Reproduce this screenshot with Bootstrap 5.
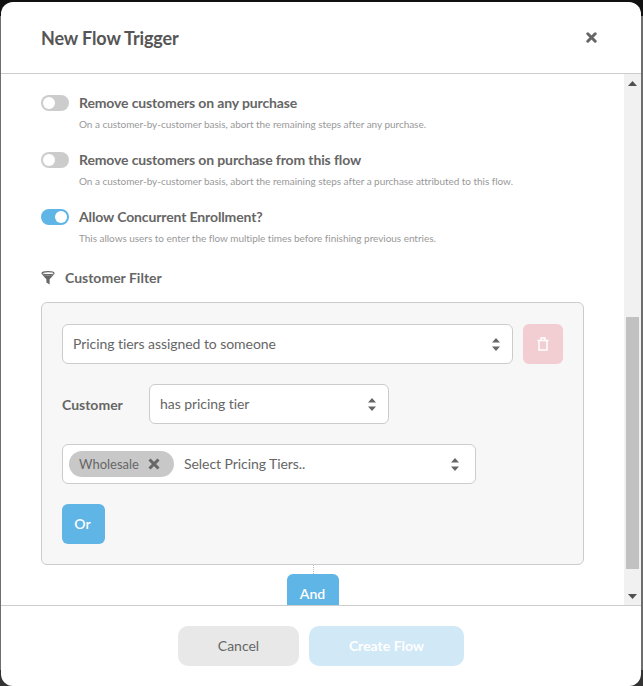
<!DOCTYPE html>
<html lang="en">
<head>
<meta charset="utf-8">
<title>New Flow Trigger</title>
<link rel="stylesheet" href="https://cdn.jsdelivr.net/npm/bootstrap@5.3.0/dist/css/bootstrap.min.css">
<style>
html,body{height:686px;overflow:hidden;}
body{margin:0;font-family:"Lato","Liberation Sans",sans-serif;color:#666;background:linear-gradient(#111 0,#111 16px,#6e6e6e 16px,#6e6e6e 670px,#333 670px);padding:2px 2px 0 1px;}
.flow-modal{height:684px;border:0;border-radius:12px;overflow:hidden;background:#fff;}
.flow-head{height:72px;padding:0 40px;border-bottom:1px solid #ccc;border-radius:0;flex:none;}
.flow-title{font-size:18px;font-weight:700;color:#555;margin:0;line-height:24px;letter-spacing:-.12px;}
.flow-x{border:0;background:none;padding:0;width:11px;height:11px;display:block;margin-right:4px;line-height:0;}
.flow-mid{height:531px;flex:none;overflow:hidden;}
.flow-scroll{width:623px;height:531px;overflow:hidden;padding:20px 40px 0;flex:none;}
.fake-bar{width:17px;background:#f1f1f1;flex:none;padding:0 2px;}
.bar-arrow{height:17px;flex:none;}
.bar-arrow-top{margin-top:1px;}
.bar-thumb{height:252px;background:#c1c1c1;}
.bar-gap{height:225px;}
.toggle-row{height:57px;}
.toggle-row.form-switch{padding-left:0;}
.toggle-row .form-check-input{width:28px;height:16px;margin:0 10px 0 0;flex:none;background-color:#ccc;border:0;float:none;background-image:url("data:image/svg+xml,%3csvg xmlns='http://www.w3.org/2000/svg' viewBox='-4 -4 8 8'%3e%3ccircle r='3' fill='%23fff'/%3e%3c/svg%3e");}
.toggle-row .form-check-input:checked{background-color:#5fb5e5;background-position:right center;}
.toggle-label{font-size:14px;font-weight:700;color:#666;line-height:18px;margin:0;letter-spacing:-.13px;}
.toggle-hint{font-size:10px;color:#999;line-height:12px;padding-left:38px;margin-top:6px;letter-spacing:-.035px;}
.filter-head{font-size:14px;font-weight:700;color:#666;line-height:18px;margin-top:4px;margin-bottom:15px;}
.filter-icon{margin-right:10px;flex:none;}
.filter-box{width:543px;height:263px;background:#f7f7f7;border:1px solid #ccc;border-radius:6px;padding:21px 20px;}
.pick{height:40px;border:1px solid #ccc;border-radius:6px;font-size:14px;color:#666;padding:0 40px 0 10px;line-height:38px;letter-spacing:-.06px;background-color:#fff;background-size:8px 13px;background-position:right 12px center;background-repeat:no-repeat;background-image:url("data:image/svg+xml,%3csvg xmlns='http://www.w3.org/2000/svg' viewBox='0 0 8 13'%3e%3cpath d='M4 0 8 4.500H0zM4 13 0 8.500h8z' fill='%23666'/%3e%3c/svg%3e");}
.pick-main{width:451px;}
.pick-mid{width:240px;}
.pick-tags{width:414px;padding-left:6px;margin-top:20px;background-position:right 16px center;}
.select-row{gap:10px;}
.cust-row{margin-top:20px;}
.trash-btn{width:40px;height:40px;background:#f2ced2;border:0;border-radius:6px;padding:0;}
.trash-btn:hover{background:#f2ced2;}
.cust-label{font-size:14px;font-weight:700;color:#666;width:87px;}
.tag-chip{height:26px;width:105px;background:#c8c8c8;border-radius:13px;font-size:13px;color:#666;padding:0 14px 0 10px;line-height:26px;letter-spacing:0;}
.tags-ph{font-size:14px;color:#666;margin-left:10px;}
.blue-btn{background:#5fb5e5;border:0;color:#fff;font-size:14px;font-weight:600;border-radius:6px;padding:0;height:40px;}
.blue-btn:hover,.blue-btn:active{background:#5fb5e5;color:#fff;}
.or-btn{width:43px;margin-top:20px;padding-right:2px;padding-bottom:1px;}
.and-wrap{width:543px;}
.and-line{height:9px;width:0;border-left:1px dotted #bbb;margin-left:1px;}
.and-btn{width:52px;padding-bottom:2px;}
.flow-foot{height:81px;border-top:1px solid #ccc;flex:none;gap:10px;padding:0;}
.foot-btn{height:40px;border:0;border-radius:10px;font-size:14px;padding:0 0 2px;margin:0;}
.cancel-btn{width:121px;background:#e8e8e8;color:#666;}
.create-btn{width:155px;background:#d1e8f7;color:#fff;font-weight:700;}
.cancel-btn:hover{background:#e8e8e8;color:#666;}
</style>
</head>
<body>
<div class="modal-content flow-modal d-flex flex-column">
  <div class="modal-header flow-head d-flex justify-content-between align-items-center">
    <h5 class="flow-title">New Flow Trigger</h5>
    <button class="flow-x" type="button" aria-label="Close">
      <svg width="11" height="11" viewBox="0 0 11 11"><path d="M1.800 1.800 9.200 9.200M9.200 1.800 1.800 9.200" stroke="#666" stroke-width="3" stroke-linecap="round"/></svg>
    </button>
  </div>
  <div class="flow-mid d-flex">
    <div class="flow-scroll">
      <div class="toggle-row form-check form-switch m-0">
        <div class="d-flex align-items-center"><input class="form-check-input" type="checkbox" role="switch"><p class="toggle-label">Remove customers on any purchase</p></div>
        <div class="toggle-hint">On a customer-by-customer basis, abort the remaining steps after any purchase.</div>
      </div>
      <div class="toggle-row form-check form-switch m-0">
        <div class="d-flex align-items-center"><input class="form-check-input" type="checkbox" role="switch"><p class="toggle-label">Remove customers on purchase from this flow</p></div>
        <div class="toggle-hint">On a customer-by-customer basis, abort the remaining steps after a purchase attributed to this flow.</div>
      </div>
      <div class="toggle-row form-check form-switch m-0">
        <div class="d-flex align-items-center"><input class="form-check-input" type="checkbox" role="switch" checked><p class="toggle-label">Allow Concurrent Enrollment?</p></div>
        <div class="toggle-hint">This allows users to enter the flow multiple times before finishing previous entries.</div>
      </div>
      <div class="filter-head d-flex align-items-center">
        <svg class="filter-icon" width="14" height="14" viewBox="0 0 14 14"><ellipse cx="7" cy="2.200" rx="6" ry="1.500" stroke="#666" stroke-width="1.200" fill="none"/><path d="M.800 3.200C3 4.800 11 4.800 13.200 3.200L8.600 8.200V13.500L5.400 11.500V8.200z" fill="#666"/></svg>
        Customer Filter
      </div>
      <div class="filter-box">
        <div class="d-flex select-row">
          <div class="pick pick-main">Pricing tiers assigned to someone</div>
          <button class="trash-btn btn d-flex align-items-center justify-content-center" type="button" aria-label="Delete">
            <svg width="12" height="14" viewBox="0 0 12 14"><path d="M.500 3.500h11M2 3.500V13h8V3.500M4 3.500V1h4v2.500" stroke="#fff" stroke-width="1.500" fill="none"/></svg>
          </button>
        </div>
        <div class="d-flex align-items-center cust-row">
          <div class="cust-label">Customer</div>
          <div class="pick pick-mid">has pricing tier</div>
        </div>
        <div class="pick pick-tags d-flex align-items-center">
          <div class="tag-chip d-flex align-items-center justify-content-between">Wholesale
            <svg width="12" height="12" viewBox="0 0 12 12"><path d="M1.500 1.500 10.500 10.500M10.500 1.500 1.500 10.500" stroke="#666" stroke-width="3"/></svg>
          </div>
          <span class="tags-ph">Select Pricing Tiers..</span>
        </div>
        <button class="btn blue-btn or-btn d-block" type="button">Or</button>
      </div>
      <div class="and-wrap d-flex flex-column align-items-center">
        <div class="and-line"></div>
        <button class="btn blue-btn and-btn" type="button">And</button>
      </div>
    </div>
    <div class="fake-bar d-flex flex-column">
      <div class="bar-arrow bar-arrow-top d-flex align-items-center justify-content-center"><svg width="9" height="5" viewBox="0 0 9 5"><path d="M4.500 0 9 5H0z" fill="#505050"/></svg></div>
      <div class="bar-gap"></div>
      <div class="bar-thumb"></div>
      <div class="flex-grow-1"></div>
      <div class="bar-arrow d-flex align-items-center justify-content-center"><svg width="9" height="5" viewBox="0 0 9 5"><path d="M4.500 5 9 0H0z" fill="#505050"/></svg></div>
    </div>
  </div>
  <div class="modal-footer flow-foot d-flex justify-content-center">
    <button class="btn foot-btn cancel-btn" type="button">Cancel</button>
    <button class="btn foot-btn create-btn" type="button">Create Flow</button>
  </div>
</div>
<script src="https://cdn.jsdelivr.net/npm/bootstrap@5.3.0/dist/js/bootstrap.bundle.min.js"></script>
</body>
</html>
